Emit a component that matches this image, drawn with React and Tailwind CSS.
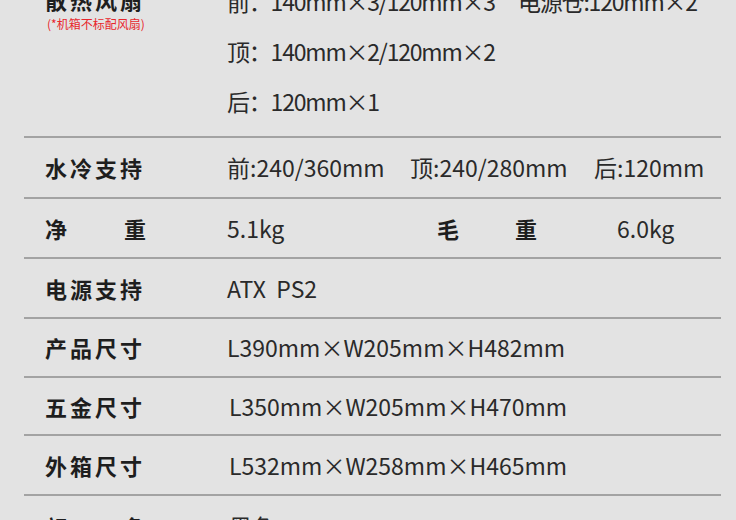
const font = { fontFamily: '"Noto Sans CJK SC", "Noto Sans", sans-serif' }

function Row({ label, h = 'h-[60px]', children }) {
  return (
    <div className={`flex items-center ${h} border-b-2 border-[#a3a3a3]`}>
      <div className="w-[203px] pl-[21px] text-[22px] font-bold tracking-[3px] text-[#1e1e1e]">{label}</div>
      <div className="flex-1 text-[23px] text-[#2a2a2a] whitespace-nowrap">{children}</div>
    </div>
  )
}

export default function App() {
  return (
    <div className="w-[736px] h-[520px] overflow-hidden bg-[#e3e3e3]" style={font}>
      <div className="mx-[24px] w-[697px] -mt-[34px]">
        {/* fans */}
        <div className="flex border-b-2 border-[#a3a3a3] pt-[10px] pb-[10px]">
          <div className="w-[203px] pl-[21px] pt-[6px]">
            <div className="text-[22px] font-bold tracking-[3px] text-[#1e1e1e] leading-[34px]">散热风扇</div>
            <div className="text-[12px] text-[#e8262c] leading-[16px] pl-[2px]">(*机箱不标配风扇)</div>
          </div>
          <div className="flex-1 text-[23px] tracking-[-1.2px] text-[#2a2a2a] leading-[50px] whitespace-nowrap">
            <div className="flex">
              <span className="w-[291px]">前：140mm×3/120mm×3</span>
              <span>电源仓:120mm×2</span>
            </div>
            <div>顶：140mm×2/120mm×2</div>
            <div>后：120mm×1</div>
          </div>
        </div>

        <Row label="水冷支持" h="h-[61px]">
          <div className="flex">
            <span className="w-[183px]">前:240/360mm</span>
            <span className="w-[184px]">顶:240/280mm</span>
            <span>后:120mm</span>
          </div>
        </Row>

        <div className="flex items-center h-[60px] border-b-2 border-[#a3a3a3]">
          <div className="w-[203px] pl-[21px] flex text-[22px] font-bold text-[#1e1e1e]">
            <span className="w-[79px]">净</span>
            <span>重</span>
          </div>
          <div className="w-[210px] text-[23px] text-[#2a2a2a]">5.1kg</div>
          <div className="w-[180px] flex text-[22px] font-bold text-[#1e1e1e]">
            <span className="w-[78px]">毛</span>
            <span>重</span>
          </div>
          <div className="text-[23px] text-[#2a2a2a]">6.0kg</div>
        </div>

        <Row label="电源支持">ATX&nbsp;&nbsp;PS2</Row>
        <Row label="产品尺寸" h="h-[59px]">L390mm×W205mm×H482mm</Row>
        <Row label="五金尺寸" h="h-[58px]"><span className="pl-[2px]">L350mm×W205mm×H470mm</span></Row>
        <Row label="外箱尺寸"><span className="pl-[2px]">L532mm×W258mm×H465mm</span></Row>

        <div className="flex items-center h-[60px]">
          <div className="w-[203px] pl-[21px] flex text-[22px] font-bold text-[#1e1e1e]">
            <span className="w-[79px]">颜</span>
            <span>色</span>
          </div>
          <div className="pl-[2px] text-[23px] text-[#2a2a2a]">黑色</div>
        </div>
      </div>
    </div>
  )
}
